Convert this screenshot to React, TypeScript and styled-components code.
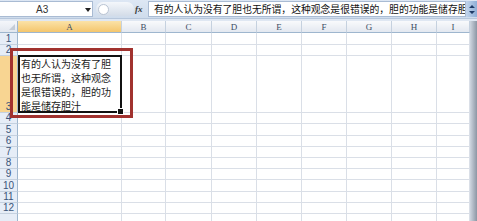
import * as React from 'react';
import styled, { createGlobalStyle } from 'styled-components';

const GlobalStyle = createGlobalStyle`
  html, body {
    margin: 0;
    padding: 0;
    background: #ffffff;
  }
`;

const COLS = ['A', 'B', 'C', 'D', 'E', 'F', 'G', 'H', 'I'];
const COL_WIDTHS = [104, 44, 46, 45, 45, 45, 45, 45, 33];
// heights of rows 1..13
const ROW_HEIGHTS = [12, 11, 57, 11, 12, 11, 11, 11, 11, 12, 11, 11, 20];

const CELL_TEXT = '有的人认为没有了胆也无所谓，这种观念是很错误的，胆的功能是储存胆汁';

const Window = styled.div`
  width: 477px;
  height: 221px;
  overflow: hidden;
  position: relative;
  background: #dfe7f2;
  font-family: 'Liberation Sans', 'Noto Sans CJK SC', sans-serif;
`;

const FormulaBar = styled.div`
  display: flex;
  align-items: center;
  height: 18px;
  background: linear-gradient(#dde7f4, #cfdcec);
  border-bottom: 1px solid #b7c7dc;
`;

const NameBox = styled.div`
  position: relative;
  width: 93px;
  height: 16px;
  background: #ffffff;
  border: 1px solid #a9bbd3;
  border-left: none;
  display: flex;
  align-items: center;
  padding-left: 36px;
  font-size: 10px;
  color: #333;
  box-sizing: border-box;
`;

const Arrow = styled.svg`
  position: absolute;
  right: 1px;
  top: 6px;
`;

const Knob = styled.div`
  width: 38px;
  height: 14px;
  margin-left: 3px;
  border-radius: 7px;
  background: linear-gradient(#f4f7fb, #d3dce8);
  display: flex;
  align-items: center;
  padding-left: 2px;
  box-sizing: border-box;
`;

const KnobDot = styled.div`
  width: 9px;
  height: 9px;
  border-radius: 50%;
  border: 1px solid #b9c4d3;
  background: #ffffff;
`;

const Fx = styled.div`
  width: 10px;
  margin-left: 1px;
  font-family: 'Liberation Serif', serif;
  font-style: italic;
  font-weight: bold;
  font-size: 9px;
  color: #3a3a3a;
`;

const FormulaInput = styled.div`
  flex: 1;
  height: 16px;
  background: #ffffff;
  border: 1px solid #a9bbd3;
  box-sizing: border-box;
  margin-left: 3px;
  padding-left: 5px;
  display: flex;
  align-items: center;
  overflow: hidden;
  white-space: nowrap;
  font-family: 'Noto Sans CJK SC', sans-serif;
  font-size: 9.8px;
  color: #111;
`;

const ScrollButton = styled.div`
  width: 11px;
  height: 16px;
  background: linear-gradient(90deg, #c3d5ec, #8eaed6);
  display: flex;
  align-items: center;
  justify-content: center;
`;

const SheetArea = styled.div`
  display: flex;
  margin-top: 2px;
`;

const Sheet = styled.div`
  display: grid;
  grid-template-columns: 18px ${COL_WIDTHS.map((w) => `${w}px`).join(' ')};
  grid-template-rows: 12px ${ROW_HEIGHTS.map((h) => `${h}px`).join(' ')};
  background: #ffffff;
`;

const RightEdge = styled.div`
  flex: 1;
  background: linear-gradient(90deg, #cfd6e0, #8c96a4);
`;

const Corner = styled.div`
  background: linear-gradient(#f4f6fa, #e2e7ef);
  border-right: 1px solid #9eb6ce;
  border-bottom: 1px solid #9eb6ce;
  position: relative;
  &::after {
    content: '';
    position: absolute;
    right: 2px;
    bottom: 2px;
    border-left: 6px solid transparent;
    border-bottom: 6px solid #c4ccd7;
  }
`;

const ColHeader = styled.div<{ $active?: boolean }>`
  background: ${(p) => (p.$active ? 'linear-gradient(#fbe2a8, #f4c66c)' : 'linear-gradient(#f9fafc, #e3e8f0)')};
  border-right: 1px solid #c5d1df;
  border-bottom: 1px solid #9eb6ce;
  display: flex;
  align-items: center;
  justify-content: center;
  font-family: 'Liberation Serif', serif;
  font-size: 9px;
  color: #3c4d63;
`;

const RowHeader = styled.div<{ $active?: boolean }>`
  background: ${(p) => (p.$active ? '#f8d592' : '#e6edf7')};
  border-right: 1px solid #9eb6ce;
  border-bottom: 1px solid #c5d1df;
  display: flex;
  align-items: flex-end;
  justify-content: center;
  font-size: 10px;
  line-height: 11px;
  color: #3a5479;
  overflow: hidden;
`;

const Cell = styled.div`
  border-right: 1px solid #dadfe7;
  border-bottom: 1px solid #dadfe7;
`;

const ActiveCell = styled.div`
  position: relative;
  border: 2px solid #111;
  margin: -1px 0 0 0;
  padding: 0 0 0 1px;
  font-family: 'Noto Sans CJK SC', sans-serif;
  font-size: 10px;
  line-height: 14px;
  color: #222;
  word-break: break-all;
  z-index: 2;
`;

const FillHandle = styled.div`
  position: absolute;
  right: -4px;
  bottom: -4px;
  width: 5px;
  height: 5px;
  background: #111;
  border: 1px solid #fff;
`;

const Annotation = styled.div`
  position: absolute;
  left: 10px;
  top: 48px;
  width: 123px;
  height: 70px;
  box-sizing: border-box;
  border: 3px solid #a1322f;
  z-index: 3;
  pointer-events: none;
`;

export default function App() {
  return (
    <Window>
      <GlobalStyle />
      <FormulaBar>
        <NameBox>
          A3
          <Arrow width="6" height="4" viewBox="0 0 6 4">
            <path d="M0 0 L6 0 L3 4 Z" fill="#222" />
          </Arrow>
        </NameBox>
        <Knob>
          <KnobDot />
        </Knob>
        <Fx>fx</Fx>
        <FormulaInput>{CELL_TEXT}</FormulaInput>
        <ScrollButton>
          <svg width="6" height="11" viewBox="0 0 6 11">
            <path d="M0 4 L3 1 L6 4 Z M0 7 L3 10 L6 7 Z" fill="#1e3a66" />
          </svg>
        </ScrollButton>
      </FormulaBar>
      <SheetArea>
        <Sheet>
          <Corner />
          {COLS.map((c) => (
            <ColHeader key={c} $active={c === 'A'}>
              {c}
            </ColHeader>
          ))}
          {ROW_HEIGHTS.map((_, i) => {
            const row = i + 1;
            return (
              <React.Fragment key={row}>
                <RowHeader $active={row === 3}>{row}</RowHeader>
                {COLS.map((c) =>
                  c === 'A' && row === 3 ? (
                    <ActiveCell key={c}>
                      {CELL_TEXT}
                      <FillHandle />
                    </ActiveCell>
                  ) : (
                    <Cell key={c} />
                  )
                )}
              </React.Fragment>
            );
          })}
        </Sheet>
        <RightEdge />
      </SheetArea>
      <Annotation />
    </Window>
  );
}
